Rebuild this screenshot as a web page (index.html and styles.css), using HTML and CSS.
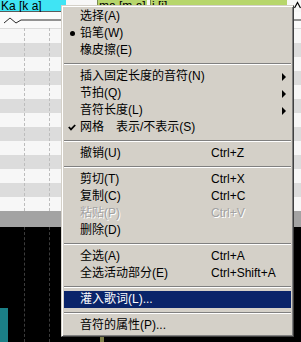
FILE: index.html
```html
<!DOCTYPE html>
<html lang="zh">
<head>
    <meta charset="UTF-8">
    <title>音符编辑 - 右键菜单</title>
    <link rel="stylesheet" href="styles.css">
</head>
<body>
    <div class="editor">
        <div class="lyrics">
            <span class="note note-cur">Ka [k a]</span>
            <span class="note note-next">ma [m a]</span>
            <span class="note note-far">i [i]</span>
            <span class="scroll-up">
                <svg width="7" height="8" viewBox="0 0 7 8"><polyline points="0.5,7 3.5,1.5 6.5,7" fill="none" stroke="#000" stroke-width="1.2"/></svg>
            </span>
        </div>
        <div class="pitch-line">
            <svg width="301" height="16" viewBox="0 0 301 16">
                <polyline points="4,11 10,6 16,11 21,8 301,8" fill="none" stroke="#2a2a2a" stroke-width="1"/>
            </svg>
        </div>
        <div class="grid">
            <div class="col"></div>
            <div class="col"></div>
            <div class="col wide"></div>
        </div>
        <div class="ruler"></div>
        <div class="velocity">
            <div class="col"><div class="vel-bar"></div></div>
            <div class="col"></div>
            <div class="col wide"><div class="vel-bar small"></div></div>
        </div>
    </div>

    <div class="menu">
        <div class="menu-item"><span class="mark"></span><span class="label">选择(A)</span></div>
        <div class="menu-item"><span class="mark"><span class="dot"></span></span><span class="label">铅笔(W)</span></div>
        <div class="menu-item"><span class="mark"></span><span class="label">橡皮擦(E)</span></div>
        <div class="sep"></div>
        <div class="menu-item"><span class="mark"></span><span class="label">插入固定长度的音符(N)</span><span class="key"></span><span class="arrow"></span></div>
        <div class="menu-item"><span class="mark"></span><span class="label">节拍(Q)</span><span class="key"></span><span class="arrow"></span></div>
        <div class="menu-item"><span class="mark"></span><span class="label">音符长度(L)</span><span class="key"></span><span class="arrow"></span></div>
        <div class="menu-item">
            <span class="mark">
                <svg width="8" height="7" viewBox="0 0 8 7"><polyline points="0.8,3 3,5.4 7.2,1" fill="none" stroke="#000" stroke-width="1.8"/></svg>
            </span>
            <span class="label">网格<span class="tab">表示/不表示(S)</span></span>
        </div>
        <div class="sep"></div>
        <div class="menu-item"><span class="mark"></span><span class="label">撤销(U)</span><span class="key">Ctrl+Z</span></div>
        <div class="sep"></div>
        <div class="menu-item"><span class="mark"></span><span class="label">剪切(T)</span><span class="key">Ctrl+X</span></div>
        <div class="menu-item"><span class="mark"></span><span class="label">复制(C)</span><span class="key">Ctrl+C</span></div>
        <div class="menu-item disabled"><span class="mark"></span><span class="label">粘贴(P)</span><span class="key">Ctrl+V</span></div>
        <div class="menu-item"><span class="mark"></span><span class="label">删除(D)</span></div>
        <div class="sep"></div>
        <div class="menu-item"><span class="mark"></span><span class="label">全选(A)</span><span class="key">Ctrl+A</span></div>
        <div class="menu-item"><span class="mark"></span><span class="label">全选活动部分(E)</span><span class="key">Ctrl+Shift+A</span></div>
        <div class="sep"></div>
        <div class="menu-item active"><span class="mark"></span><span class="label">灌入歌词(L)...</span></div>
        <div class="sep"></div>
        <div class="menu-item"><span class="mark"></span><span class="label">音符的属性(P)...</span></div>
    </div>
</body>
</html>
```

FILE: styles.css
```css
body {
    margin: 0;
    background: #000;
    font-family: "Liberation Sans", "Noto Sans CJK SC", sans-serif;
    font-size: 12px;
}
.editor {
    width: 301px;
    height: 342px;
    display: flex;
    flex-direction: column;
    overflow: hidden;
    background: #000;
}

/* lyric track */
.lyrics {
    height: 12px;
    display: flex;
    background: #f7f7f7;
    line-height: 12px;
}
.note {
    height: 11px;
    border-bottom: 1px solid #5a5a5a;
    padding-left: 1px;
    white-space: nowrap;
    color: #000;
}
.note-cur {
    width: 65px;
    background: #3fe4f4;
}
.note-next {
    width: 48px;
    margin-left: 31px;
    background: #b7d66c;
    border-left: 1px solid #7a8a50;
}
.note-far {
    width: 135px;
    margin-left: 3px;
    background: #b7d66c;
    border-left: 1px solid #7a8a50;
}
.scroll-up {
    margin-left: auto;
    width: 7px;
    padding-top: 1px;
}
.scroll-up svg {
    display: block;
}

/* pitch curve row */
.pitch-line {
    height: 16px;
    background: #fafafa;
}
.pitch-line svg {
    display: block;
}

/* piano roll rows */
.grid {
    height: 183px;
    display: flex;
    background: repeating-linear-gradient(#f7f7f7 0 14px, #dcdcdc 14px 28px);
    background-position: 0 1px;
}
.col {
    width: 24px;
    border-right: 1px dashed #bdbdbd;
}
.col.wide {
    flex: 1;
    border-right: none;
}
.ruler {
    height: 16px;
    background: #a3a3a3;
}

/* velocity pane */
.velocity {
    flex: 1;
    display: flex;
}
.velocity .col {
    border-right-color: #3c3c3c;
    display: flex;
    align-items: flex-end;
}
.velocity .col.wide {
    border-right: none;
}
.vel-bar {
    width: 8px;
    height: 34px;
    background: #1b7f86;
}
.vel-bar.small {
    width: 4px;
    height: 8px;
    margin-left: 50px;
    background: #7e7e48;
}

/* context menu */
.menu {
    position: absolute;
    top: 5px;
    left: 61px;
    width: 233px;
    box-sizing: border-box;
    padding: 2px;
    background: #d4d0c8;
    border: 1px solid;
    border-color: #d4d0c8 #404040 #404040 #d4d0c8;
    box-shadow: inset 1px 1px #fff, inset -1px -1px #808080;
    color: #000;
}
.menu-item {
    display: grid;
    grid-template-columns: 16px 131px 1fr 14px;
    height: 17px;
    align-items: center;
    line-height: 17px;
    white-space: nowrap;
}
.mark {
    display: flex;
    justify-content: center;
    align-items: center;
    height: 17px;
}
.mark svg {
    display: block;
}
.dot {
    width: 5px;
    height: 5px;
    border-radius: 50%;
    background: #000;
}
.tab {
    margin-left: 12px;
}
.arrow {
    width: 0;
    height: 0;
    margin-left: 5px;
    border-top: 4px solid transparent;
    border-bottom: 4px solid transparent;
    border-left: 4px solid #000;
}
.menu-item.disabled {
    color: #a2a2a2;
    text-shadow: 1px 1px 0 #fff;
}
.menu-item.active {
    background: #0a246a;
    color: #fff;
}
.sep {
    height: 9px;
    box-sizing: border-box;
    padding-top: 4px;
}
.sep::before {
    content: "";
    display: block;
    height: 1px;
    background: #808080;
    border-bottom: 1px solid #fff;
}
```
